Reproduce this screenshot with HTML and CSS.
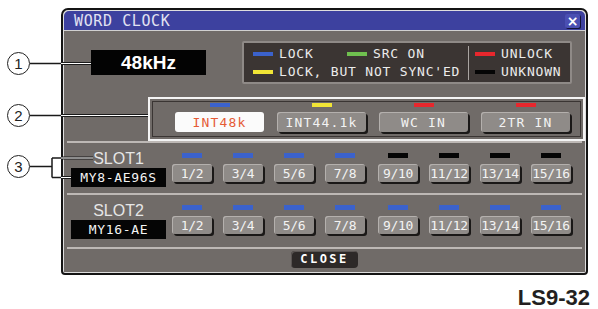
FILE: index.html
```html
<!DOCTYPE html>
<html lang="en">
<head>
    <meta charset="UTF-8">
    <meta name="viewport" content="width=device-width, initial-scale=1.0">
    <title>Word Clock</title>
    <link rel="stylesheet" href="styles.css">
</head>
<body>
<div class="page">
    <div class="window">
        <div class="titlebar">
            <span class="title">WORD CLOCK</span>
            <span class="close-x">×</span>
        </div>

        <div class="panel">
            <!-- current rate + legend -->
            <div class="top-row">
                <div class="rate">48kHz</div>
                <div class="legend">
                    <div class="legend-left">
                        <div class="legend-line">
                            <span class="key first"><i class="bar blue"></i>LOCK</span>
                            <span class="key"><i class="bar green"></i>SRC ON</span>
                        </div>
                        <div class="legend-line">
                            <span class="key"><i class="bar yellow"></i>LOCK, BUT NOT SYNC'ED</span>
                        </div>
                    </div>
                    <div class="legend-divider"></div>
                    <div class="legend-right">
                        <div class="legend-line">
                            <span class="key"><i class="bar red"></i>UNLOCK</span>
                        </div>
                        <div class="legend-line">
                            <span class="key"><i class="bar black"></i>UNKNOWN</span>
                        </div>
                    </div>
                </div>
            </div>

            <!-- clock source -->
            <div class="source-row">
                <div class="source-box">
                    <div class="src"><i class="bar blue"></i><span class="btn on">INT48k</span></div>
                    <div class="src"><i class="bar yellow"></i><span class="btn">INT44.1k</span></div>
                    <div class="src"><i class="bar red"></i><span class="btn">WC IN</span></div>
                    <div class="src"><i class="bar red"></i><span class="btn">2TR IN</span></div>
                </div>
            </div>
            <div class="sep"></div>

            <div class="slot-row">
                <div class="slot-id">
                    <span class="slot-name">SLOT1</span>
                    <span class="card">MY8-AE96S</span>
                </div>
                <div class="ports">
                    <div class="port"><i class="bar blue"></i><span class="btn">1/2</span></div>
                    <div class="port"><i class="bar blue"></i><span class="btn">3/4</span></div>
                    <div class="port"><i class="bar blue"></i><span class="btn">5/6</span></div>
                    <div class="port"><i class="bar blue"></i><span class="btn">7/8</span></div>
                    <div class="port split"><i class="bar black"></i><span class="btn">9/10</span></div>
                    <div class="port"><i class="bar black"></i><span class="btn">11/12</span></div>
                    <div class="port"><i class="bar black"></i><span class="btn">13/14</span></div>
                    <div class="port"><i class="bar black"></i><span class="btn">15/16</span></div>
                </div>
            </div>
            <div class="sep"></div>

            <div class="slot-row tall">
                <div class="slot-id">
                    <span class="slot-name">SLOT2</span>
                    <span class="card">MY16-AE</span>
                </div>
                <div class="ports">
                    <div class="port"><i class="bar blue"></i><span class="btn">1/2</span></div>
                    <div class="port"><i class="bar blue"></i><span class="btn">3/4</span></div>
                    <div class="port"><i class="bar blue"></i><span class="btn">5/6</span></div>
                    <div class="port"><i class="bar blue"></i><span class="btn">7/8</span></div>
                    <div class="port split"><i class="bar blue"></i><span class="btn">9/10</span></div>
                    <div class="port"><i class="bar blue"></i><span class="btn">11/12</span></div>
                    <div class="port"><i class="bar blue"></i><span class="btn">13/14</span></div>
                    <div class="port"><i class="bar blue"></i><span class="btn">15/16</span></div>
                </div>
            </div>
            <div class="sep"></div>

            <div class="close-row">
                <span class="close-btn">CLOSE</span>
            </div>
        </div>
    </div>

    <div class="model">LS9-32</div>

    <!-- numbered callouts drawn over the screen -->
    <svg class="callouts" width="598" height="309" viewBox="0 0 598 309">
        <path class="leader-out" d="M30 63.5H61M30 115.5H61M30 166.5H52M52 158V177.5M52 158H61M52 177.5H61"/>
        <path class="leader-edge" d="M61 63.5H91M61 115.5H148M61 158H93M61 177.5H71"/>
        <path class="leader-core" d="M61 63.5H91M61 115.5H148M61 158H93M61 177.5H71"/>
        <circle class="ring" cx="18.5" cy="63.5" r="11"/>
        <circle class="ring" cx="18.5" cy="115.5" r="11"/>
        <circle class="ring" cx="18.5" cy="166.5" r="11"/>
        <text class="num" x="18.5" y="69">1</text>
        <text class="num" x="18.5" y="121">2</text>
        <text class="num" x="18.5" y="172">3</text>
    </svg>
</div>
</body>
</html>
```

FILE: styles.css
```css
:root {
    --panel: #706b68;
    --btn: #8f8b88;
    --pixel: "DejaVu Sans Mono", monospace;
}

body {
    margin: 0;
    background: #fff;
    font-family: "Liberation Sans", Arial, sans-serif;
}

.page {
    position: relative;
    width: 598px;
    height: 309px;
    overflow: hidden;
}

/* window frame */
.window {
    margin: 8px 0 0 61px;
    width: 527px;
    height: 267px;
    box-sizing: border-box;
    border: 2px solid #141414;
    border-radius: 7px 7px 4px 4px;
    padding: 1px;
    background: #dedede;
    display: flex;
    flex-direction: column;
}

.titlebar {
    height: 19px;
    border-bottom: 1px solid #d0d0d0;
    border-radius: 5px 5px 0 0;
    background: #3d419f;
    display: flex;
    align-items: center;
    justify-content: space-between;
    padding: 0 5px 0 10px;
}

.title {
    font: 15px var(--pixel);
    letter-spacing: 0.6px;
    color: #e2e2f2;
}

.close-x {
    width: 15px;
    height: 14px;
    border-radius: 2px;
    background: #4a4fb2;
    box-shadow: 1px 1px 0 #121235;
    color: #fff;
    font: bold 14px/14px "DejaVu Sans", sans-serif;
    text-align: center;
}

.panel {
    flex: 1;
    background: var(--panel);
}

/* rate + legend */
.top-row {
    height: 66px;
    display: flex;
    align-items: flex-start;
    padding-left: 27px;
}

.rate {
    margin-top: 19px;
    width: 115px;
    height: 25px;
    background: #030303;
    color: #fff;
    font: bold 19px/25px "Liberation Sans", sans-serif;
    text-align: center;
}

.legend {
    margin: 10px 0 0 36px;
    width: 330px;
    height: 43px;
    box-sizing: border-box;
    border: 2px solid #8f8a87;
    border-radius: 2px;
    background: #3b3533;
    padding-top: 2px;
    display: flex;
}

.legend-left {
    width: 224px;
    box-sizing: border-box;
    padding-left: 9px;
    display: flex;
    flex-direction: column;
    gap: 1px;
}

.legend-right {
    padding-left: 6px;
    display: flex;
    flex-direction: column;
    gap: 1px;
}

.legend-divider {
    width: 1px;
    margin: 1px 0 2px;
    background: #aaa5a2;
}

.legend-line {
    height: 17px;
    display: flex;
    align-items: center;
}

.key {
    display: flex;
    align-items: center;
    gap: 6px;
    white-space: nowrap;
    color: #ececec;
    font: 13px var(--pixel);
    letter-spacing: 0.8px;
}

.key.first {
    width: 94px;
}

.bar {
    display: block;
    width: 20px;
    height: 4px;
}

.bar.blue { background: #3b62cc; }
.bar.green { background: #6fc04f; }
.bar.yellow { background: #f1e536; }
.bar.red { background: #e7272d; }
.bar.black { background: #050505; }

/* buttons */
.btn {
    display: flex;
    align-items: center;
    justify-content: center;
    box-sizing: border-box;
    border-radius: 3px;
    background: var(--btn);
    color: #f3f3f3;
    box-shadow: 2px 2px 0 #1a1817, inset 1px 1px 0 #b4b0ad;
    font: 13px var(--pixel);
    white-space: nowrap;
}

.btn.on {
    background: #fbfbfb;
    color: #e55b36;
    box-shadow: none;
}

/* clock source */
.source-row {
    height: 44px;
}

.source-box {
    margin-left: 84px;
    width: 437px;
    height: 44px;
    box-sizing: border-box;
    border: 2px solid #f4f4f4;
    box-shadow: inset 0 0 0 2px var(--panel), inset 0 0 0 3px #3a3533;
    padding-left: 25px;
    display: flex;
    gap: 13px;
}

.src {
    display: flex;
    flex-direction: column;
    align-items: center;
    padding-top: 4px;
}

.src .bar {
    margin-bottom: 5px;
}

.src .btn {
    width: 89px;
    height: 20px;
    letter-spacing: 1.2px;
}

.sep {
    height: 2px;
    margin: 0 3px;
    background: #bdb8b5;
}

/* slots */
.slot-row {
    height: 50px;
    display: flex;
    padding-left: 7px;
}

.slot-row.tall {
    height: 52px;
}

.slot-id {
    width: 95px;
    padding-top: 7px;
    display: flex;
    flex-direction: column;
    align-items: center;
}

.slot-name {
    font: 16px/18px "Liberation Sans", sans-serif;
    color: #e6e6e6;
}

.card {
    width: 95px;
    height: 19px;
    background: #050505;
    color: #f4f4f4;
    font: 13px/19px var(--pixel);
    letter-spacing: 0.7px;
    text-align: center;
}

.ports {
    display: flex;
    gap: 11px;
    margin-left: 6px;
    padding-top: 10px;
}

.port {
    display: flex;
    flex-direction: column;
    align-items: center;
}

.port.split {
    margin-left: 2px;
}

.port .bar {
    height: 5px;
    margin-bottom: 6px;
}

.port .btn {
    width: 40px;
    height: 18px;
    letter-spacing: -0.3px;
}

/* close */
.close-row {
    height: 23px;
    box-sizing: border-box;
    padding-top: 2px;
    display: flex;
    justify-content: center;
}

.close-btn {
    width: 67px;
    height: 17px;
    border-radius: 4px;
    background: #2d2928;
    box-shadow: inset 1px 1px 0 #5b5654;
    color: #fff;
    font: bold 12px/17px var(--pixel);
    letter-spacing: 2.5px;
    text-align: center;
}

.model {
    margin-top: 10px;
    padding-right: 8px;
    text-align: right;
    font: bold 22px/25px "Liberation Sans", Arial, sans-serif;
    color: #231f20;
}

/* callouts */
.callouts {
    position: absolute;
    left: 0;
    top: 0;
    pointer-events: none;
}

.leader-out {
    fill: none;
    stroke: #1a1a1a;
    stroke-width: 1.5;
}

.leader-edge {
    fill: none;
    stroke: #1a1a1a;
    stroke-width: 3;
}

.leader-core {
    fill: none;
    stroke: #fff;
    stroke-width: 1;
}

.ring {
    fill: #fff;
    stroke: #222;
    stroke-width: 1;
}

.num {
    font: 15px "Liberation Sans", sans-serif;
    fill: #222;
    text-anchor: middle;
}
```
